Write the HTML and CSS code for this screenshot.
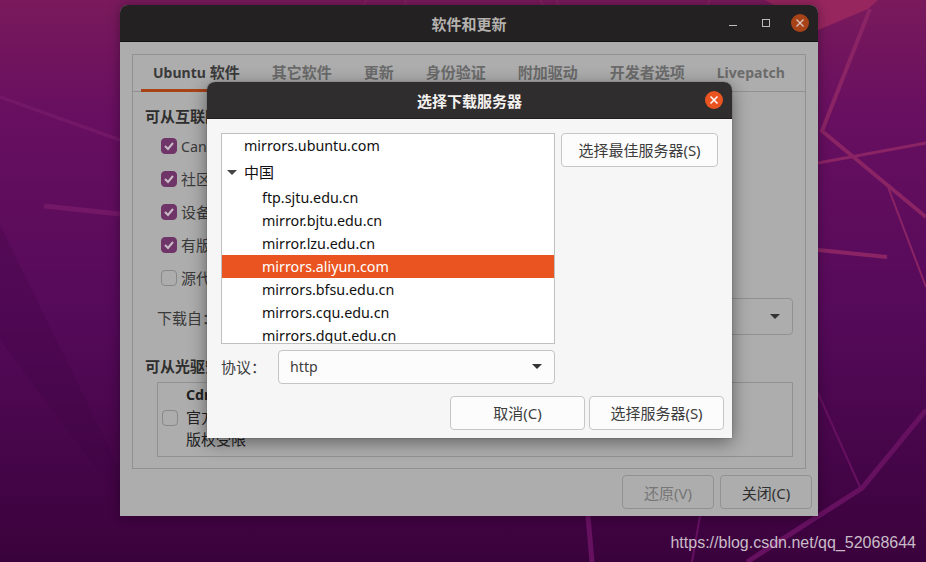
FILE: index.html
```html
<!DOCTYPE html>
<html lang="zh-CN">
<head>
<meta charset="utf-8">
<title>软件和更新</title>
<link rel="stylesheet" href="styles.css">
</head>
<body>
<div class="desktop">
  <svg class="wallpaper" viewBox="0 0 926 562" preserveAspectRatio="none" aria-hidden="true">
    <defs>
      <linearGradient id="bg" x1="0.5" y1="0" x2="0.5" y2="1">
        <stop offset="0" stop-color="#7a1a5c"/>
        <stop offset="0.2" stop-color="#680f60"/>
        <stop offset="0.55" stop-color="#560a5a"/>
        <stop offset="1" stop-color="#3a023c"/>
      </linearGradient>
    </defs>
    <rect width="926" height="562" fill="url(#bg)"/>
    <polygon points="0,225 120,470 120,500 0,340" fill="#3a0240" opacity="0.25"/>
    <polygon points="765,0 878,0 868,9 818,30" fill="#97265f"/>
    <g fill="none" stroke="#8a2465" stroke-linecap="butt">
      <path d="M870 9L822 131L926 217" stroke-width="4"/>
      <path d="M818 163L926 143" stroke-width="3"/>
      <path d="M888 187L926 287" stroke-width="2"/>
      <path d="M818 250L887 257" stroke-width="4"/>
      <path d="M367 0L363 5M406 0L405 5M540 0L543 5M557 0L558 5M710 0L707 5" stroke-width="2" opacity="0.7"/>
    </g>
    <g fill="none" stroke="#731767" stroke-linecap="butt">
      <path d="M0 97L120 140" stroke-width="3.5"/>
      <path d="M44 206L120 214" stroke-width="5"/>
    </g>
    <g fill="none" stroke="#661060" stroke-linecap="butt">
      <path d="M926 410L862 488L747 562" stroke-width="5"/>
      <path d="M818 393L860 487" stroke-width="2"/>
      <path d="M588 516L592 562" stroke-width="5"/>
      <path d="M700 516L692 562" stroke-width="2"/>
    </g>
  </svg>

  <section class="window main-window">
    <header class="titlebar main-titlebar">
      <span class="title">软件和更新</span>
      <div class="window-controls">
        <svg class="ctl" viewBox="0 0 16 16"><path d="M4 10.5h8" stroke="#bdbdbd" stroke-width="1"/></svg>
        <svg class="ctl" viewBox="0 0 16 16"><rect x="4.5" y="4.5" width="7" height="7" fill="none" stroke="#bdbdbd" stroke-width="1"/></svg>
        <span class="close-btn dim"><svg viewBox="0 0 18 18"><path d="M5.5 5.5l7 7M12.5 5.5l-7 7" stroke="#d8c8c0" stroke-width="1.3"/></svg></span>
      </div>
    </header>
    <div class="main-body">
      <div class="notebook">
        <nav class="tabs">
          <span class="tab active"><span class="tab-latin">Ubuntu</span> 软件</span>
          <span class="tab">其它软件</span>
          <span class="tab">更新</span>
          <span class="tab">身份验证</span>
          <span class="tab">附加驱动</span>
          <span class="tab">开发者选项</span>
          <span class="tab"><span class="tab-latin">Livepatch</span></span>
        </nav>
        <div class="page">
          <h3 class="heading">可从互联网下载</h3>
          <ul class="checks">
            <li class="check-row"><span class="check on"><svg viewBox="0 0 14 14"><path d="M3 7l3 3 5-6" fill="none" stroke="#c8bcc8" stroke-width="2"/></svg></span><span><span class="latin">Canonical</span> 支持的免费和开源软件</span></li>
            <li class="check-row"><span class="check on"><svg viewBox="0 0 14 14"><path d="M3 7l3 3 5-6" fill="none" stroke="#c8bcc8" stroke-width="2"/></svg></span>社区维护的免费和开源软件</li>
            <li class="check-row"><span class="check on"><svg viewBox="0 0 14 14"><path d="M3 7l3 3 5-6" fill="none" stroke="#c8bcc8" stroke-width="2"/></svg></span>设备的专有驱动</li>
            <li class="check-row"><span class="check on"><svg viewBox="0 0 14 14"><path d="M3 7l3 3 5-6" fill="none" stroke="#c8bcc8" stroke-width="2"/></svg></span>有版权和合法性问题的软件</li>
            <li class="check-row"><span class="check"></span>源代码</li>
          </ul>
          <div class="download-row">
            <span class="download-label">下载自：</span>
            <div class="combo dim-combo"><span class="arrow dark"></span></div>
          </div>
          <h3 class="heading cd-heading">可从光驱安装</h3>
          <div class="cd-box">
            <span class="check cd-check"></span>
            <div class="cd-text">
              <strong class="latin">Cdrom</strong>
              <span>官方支持</span>
              <span>版权受限</span>
            </div>
          </div>
        </div>
      </div>
      <footer class="main-actions">
        <span class="btn dim-btn disabled">还原(V)</span>
        <span class="btn dim-btn">关闭(C)</span>
      </footer>
    </div>
  </section>

  <section class="window dialog">
    <header class="titlebar dialog-titlebar">
      <span class="title">选择下载服务器</span>
      <span class="close-btn"><svg viewBox="0 0 18 18"><path d="M5.5 5.5l7 7M12.5 5.5l-7 7" stroke="#fff" stroke-width="1.5"/></svg></span>
    </header>
    <div class="dialog-body">
      <div class="dialog-top">
        <div class="server-col">
          <div class="server-list">
            <div class="row lvl0 first">mirrors.ubuntu.com</div>
            <div class="row lvl0 group"><span class="arrow tree"></span>中国</div>
            <div class="row lvl1">ftp.sjtu.edu.cn</div>
            <div class="row lvl1">mirror.bjtu.edu.cn</div>
            <div class="row lvl1">mirror.lzu.edu.cn</div>
            <div class="row lvl1 selected">mirrors.aliyun.com</div>
            <div class="row lvl1">mirrors.bfsu.edu.cn</div>
            <div class="row lvl1">mirrors.cqu.edu.cn</div>
            <div class="row lvl1">mirrors.dgut.edu.cn</div>
          </div>
          <div class="protocol">
            <span class="protocol-label">协议：</span>
            <div class="combo proto-combo"><span class="latin">http</span><span class="arrow dark"></span></div>
          </div>
        </div>
        <span class="btn lift best-btn">选择最佳服务器(S)</span>
      </div>
      <footer class="dialog-actions">
        <span class="btn lift cancel-btn">取消(C)</span>
        <span class="btn lift choose-btn">选择服务器(S)</span>
      </footer>
    </div>
  </section>

  <span class="watermark">https://blog.csdn.net/qq_52068644</span>
</div>
</body>
</html>
```

FILE: styles.css
```css
* { box-sizing: border-box; }
html, body { margin: 0; padding: 0; }
body {
  width: 926px;
  height: 562px;
  overflow: hidden;
  font-family: "Noto Sans", "Noto Sans CJK SC", sans-serif;
  font-size: 15px;
}
.latin { font-size: 14.2px; }
.tab-latin { font-size: 14px; }
.desktop { position: relative; width: 926px; height: 562px; overflow: hidden; }
.wallpaper { position: absolute; inset: 0; width: 926px; height: 562px; display: block; }

.window { position: absolute; display: flex; flex-direction: column; }
.main-window {
  left: 120px; top: 5px; width: 698px; height: 511px;
  border-radius: 8px 8px 0 0;
  overflow: hidden;
  background: #adadad;
  box-shadow: 0 0 12px rgba(0,0,0,.35);
}
.dialog {
  left: 207px; top: 82px; width: 525px; height: 356px;
  border-radius: 8px 8px 0 0;
  background: #f6f6f6;
  box-shadow: 0 4px 18px rgba(0,0,0,.45), 0 0 1px rgba(0,0,0,.7);
}

.titlebar { display: flex; align-items: center; justify-content: center; flex: none; position: relative; }
.main-titlebar { height: 37px; background: #232122; color: #b4b1ae; border-bottom: 1px solid #111; }
.dialog-titlebar { height: 37px; background: #302d2e; color: #f4f2f0; border-radius: 8px 8px 0 0; border-bottom: 1px solid #1f1d1e; }
.title { font-weight: 700; font-size: 15px; }
.window-controls { position: absolute; right: 9px; top: 9px; display: flex; align-items: center; gap: 17px; }
.ctl { width: 16px; height: 16px; display: block; }
.close-btn { width: 18px; height: 18px; border-radius: 50%; background: #e95420; display: block; }
.close-btn.dim { background: #a84317; }
.close-btn svg { display: block; width: 18px; height: 18px; }
.dialog-titlebar .close-btn { position: absolute; right: 9px; top: 9px; }

.main-body { flex: 1; display: flex; flex-direction: column; padding: 12px 12px 6px; min-height: 0; }
.notebook { height: 415px; border: 1px solid #919191; display: flex; flex-direction: column; flex: none; }
.tabs { display: flex; height: 37px; border-bottom: 1px solid #919191; padding-left: 8px; gap: 8px; flex: none; }
.tab { padding: 0 12px; font-weight: 700; font-size: 15px; line-height: 35px; color: #6b6b6b; white-space: nowrap; }
.tab.active { color: #3a3a3a; border-bottom: 3px solid #a84317; height: 37px; }
.page { padding: 0 24px 0 12px; flex: 1; color: #3a3a3a; }
.heading { margin: 14px 0 0; font-size: 15px; font-weight: 700; color: #2e2e2e; line-height: 20px; }
.checks { list-style: none; margin: 3px 0 0 16px; padding: 0; }
.check-row { display: flex; align-items: center; gap: 4px; height: 33px; color: #3a3a3a; white-space: nowrap; }
.check { width: 16px; height: 16px; border-radius: 4px; border: 1px solid #888; flex: none; display: block; }
.check.on { background: #6f3568; border-color: #6f3568; }
.check svg { display: block; width: 14px; height: 14px; }
.download-row { display: flex; align-items: center; margin: 4px -12px 0 12px; height: 37px; }
.download-label { flex: none; width: 60px; padding-top: 2px; }
.combo { display: flex; align-items: center; justify-content: space-between; border-radius: 4px; border: 1px solid #c4c4c4; }
.dim-combo { flex: 1; height: 37px; margin-left: 40px; border-color: #919191; justify-content: flex-end; padding-right: 12px; }
.arrow { display: block; width: 0; height: 0; border-left: 5px solid transparent; border-right: 5px solid transparent; border-top: 5px solid #333; }
.cd-heading { margin-top: 21px; }
.cd-box { margin: 6px -12px 0 12px; height: 75px; border: 1px solid #919191; display: flex; align-items: center; padding-left: 4px; gap: 8px; color: #111; }
.cd-check { margin-bottom: 4px; }
.cd-text { display: flex; flex-direction: column; align-self: flex-start; margin-top: 1px; line-height: 22px; color: #222; }
.main-actions { display: flex; justify-content: flex-end; gap: 6px; margin-top: 6px; margin-right: -6px; }
.btn { display: flex; align-items: center; justify-content: center; height: 34px; border: 1px solid #c6c6c6; border-radius: 4px; background: #fcfcfc; color: #3d3d3d; white-space: nowrap; flex: none; }
.btn.lift { padding-bottom: 2px; }
.dim-btn { width: 92px; background: #adadad; border-color: #929292; color: #2f2f2f; }
.dim-btn.disabled { color: #767676; }

.dialog-body { flex: 1; display: flex; flex-direction: column; padding: 14px 8px 0 14px; min-height: 0; }
.dialog-top { display: flex; gap: 6px; align-items: flex-start; }
.server-col { width: 334px; flex: none; display: flex; flex-direction: column; }
.server-list { height: 211px; overflow: hidden; background: #fff; border: 1px solid #c0c0c0; color: #111; font-size: 14.3px; }
.row { height: 23px; line-height: 23px; white-space: nowrap; position: relative; }
.row.first { height: 24px; }
.row.group { height: 28px; line-height: 28px; font-size: 15px; }
.lvl0 { padding-left: 22px; }
.lvl1 { padding-left: 40px; }
.row.selected { background: #e95420; color: #fff; }
.tree { position: absolute; left: 5px; top: 12px; border-top-color: #444; }
.protocol { display: flex; align-items: center; margin-top: 6px; height: 34px; }
.protocol-label { width: 57px; flex: none; color: #3d3d3d; padding-bottom: 2px; }
.proto-combo { flex: 1; height: 34px; background: #fcfcfc; padding: 0 12px 2px 11px; color: #3d3d3d; }
.best-btn { width: 157px; }
.dialog-actions { display: flex; justify-content: flex-end; gap: 4px; margin-top: 12px; }
.cancel-btn { width: 135px; }
.choose-btn { width: 135px; }

.watermark { position: absolute; right: 10px; top: 534px; font-family: "Liberation Sans", sans-serif; font-size: 16px; color: #c9bcc8; white-space: nowrap; }
```
